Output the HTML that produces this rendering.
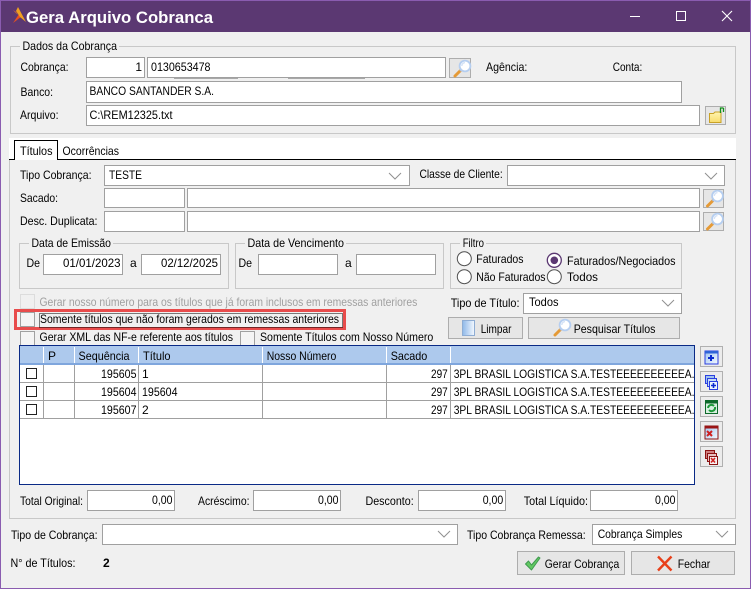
<!DOCTYPE html>
<html lang="pt-BR"><head><meta charset="utf-8"><title>Gera Arquivo Cobranca</title>
<style>
html,body{margin:0;padding:0;width:751px;height:589px;overflow:hidden;background:#f0f0f0}
svg{display:block}
text{font-family:"Liberation Sans",Arial,sans-serif;font-size:12px;fill:#000;white-space:pre}
.b{shape-rendering:crispEdges}
.i{fill:#fff;stroke:#a0a0a0;stroke-width:1}
.g{fill:none;stroke:#c8c8c8;stroke-width:1}
.btn{fill:#e6e6e6;stroke:#adadad;stroke-width:1}
.sb{fill:#ececec;stroke:#b0b0b0;stroke-width:1}
.ck{fill:#f4f4f4;stroke:#a0a0a0;stroke-width:1}
.gc{fill:#fff;stroke:#222;stroke-width:1}
.bg{fill:#f0f0f0;stroke:none}
.ch{fill:none;stroke:#909090;stroke-width:1}
.r{fill:#fff;stroke:#505050;stroke-width:1}
</style></head><body>
<svg width="751" height="589" viewBox="0 0 751 589" xmlns="http://www.w3.org/2000/svg">
<defs>
<linearGradient id="blue" x1="0" y1="0" x2="1" y2="1"><stop offset="0" stop-color="#9fc4ee"/><stop offset="1" stop-color="#f4f9ff"/></linearGradient>
<linearGradient id="lim" x1="0" y1="0" x2="1" y2="0"><stop offset="0" stop-color="#8fb8e8"/><stop offset="1" stop-color="#f4f9ff"/></linearGradient>
<linearGradient id="fold" x1="0" y1="0" x2="0" y2="1"><stop offset="0" stop-color="#fff4b0"/><stop offset="1" stop-color="#f8dc6c"/></linearGradient>
<symbol id="mag" viewBox="0 0 20 20" width="20" height="20">
<path d="M3 17L8 12" stroke="#e59a36" stroke-width="3" stroke-linecap="round" fill="none"/>
<path d="M8 12L10 10" stroke="#b0b6c4" stroke-width="2" fill="none"/>
<circle cx="13" cy="7" r="5.4" fill="#fff" stroke="#b5cef0" stroke-width="1.8"/>
<path d="M9.8 7a3.4 3.4 0 0 1 3.2-3.4" stroke="#d4e2f6" stroke-width="1.4" fill="none"/>
</symbol>
<symbol id="win" viewBox="0 0 16 16" width="16" height="16">
<rect x="1" y="1" width="13" height="13" fill="url(#blue)" stroke="#2b3fe0"/>
<rect x="1" y="1" width="13" height="2.5" fill="#2f63d8"/>
</symbol>
<symbol id="wr" viewBox="0 0 16 16" width="16" height="16">
<rect x="1" y="1" width="13" height="13" fill="url(#blue)" stroke="#8b1212"/>
<rect x="1" y="1" width="13" height="2.5" fill="#9a1414"/>
</symbol>
</defs>

<!-- window -->
<rect width="751" height="589" fill="#8a5cb0"/>
<rect x="1" y="1" width="749" height="587" fill="#f0f0f0"/>
<rect x="1" y="1" width="749" height="31" fill="#5b3872"/>
<path d="M13 23L19 14L22 16L17 20Z" fill="#e8501e"/>
<path d="M18 7L26 22L20 17L16 11Z" fill="#f0a020"/>
<path d="M16 12L13 10L18 15Z" fill="#f0742a"/>
<text x="26" y="23" textLength="187" lengthAdjust="spacingAndGlyphs" style="font-size:17px;font-weight:bold;fill:#fff">Gera Arquivo Cobranca</text>
<g class="b"><rect x="630" y="16" width="10" height="1" fill="#fff"/></g>
<rect class="b" x="676.500" y="11.500" width="9" height="9" fill="none" stroke="#fff"/>
<path d="M722 11L732 21M732 11L722 21" stroke="#fff" stroke-width="1.100" fill="none"/>

<!-- dados -->
<g class="b">
<rect class="g" x="10.500" y="46.500" width="725" height="87"/>
<rect class="bg" x="20" y="42" width="99" height="10"/>
<rect x="174" y="77" width="64" height="2" fill="#a8a8a8"/><rect x="288" y="77" width="77" height="2" fill="#a8a8a8"/>
<rect class="i" x="86.500" y="57.500" width="58" height="20"/>
<rect class="i" x="147.500" y="57.500" width="298" height="20"/>
<rect class="btn" x="449.500" y="58.500" width="21" height="19"/>
<rect class="i" x="86.500" y="81.500" width="595" height="21"/>
<rect class="i" x="86.500" y="105.500" width="613" height="20"/>
<rect class="btn" x="705.500" y="106.500" width="20" height="18"/>
</g>
<use href="#mag" x="452" y="59"/>
<path d="M709.500 113.500h4l1.500-1.500h6v10.500h-11.500z" fill="url(#fold)" stroke="#c9a227"/>
<path d="M720.500 113v-5h3M723.500 108v4" stroke="#12901a" stroke-width="1.300" fill="none"/>
<text x="22.500" y="50" textLength="94.500" lengthAdjust="spacingAndGlyphs">Dados da Cobrança</text>
<text x="20.500" y="71" textLength="48" lengthAdjust="spacingAndGlyphs">Cobrança:</text>
<text x="142" y="71" text-anchor="end">1</text>
<text x="151" y="71" textLength="59.500" lengthAdjust="spacingAndGlyphs">0130653478</text>
<text x="486" y="71" textLength="41.300" lengthAdjust="spacingAndGlyphs">Agência:</text>
<text x="612.700" y="71" textLength="29.600" lengthAdjust="spacingAndGlyphs">Conta:</text>
<text x="20.500" y="96" textLength="32.500" lengthAdjust="spacingAndGlyphs">Banco:</text>
<text x="89.500" y="95" textLength="124.500" lengthAdjust="spacingAndGlyphs">BANCO SANTANDER S.A.</text>
<text x="20" y="119" textLength="38.500" lengthAdjust="spacingAndGlyphs">Arquivo:</text>
<text x="89.500" y="119" textLength="83" lengthAdjust="spacingAndGlyphs">C:\REM12325.txt</text>

<!-- tabs -->
<g class="b">
<rect x="9" y="138" width="727" height="21" fill="#fff"/>
<rect x="9" y="159" width="727" height="1" fill="#000"/>
<path d="M14.500 160V140.500H57.500V160" fill="#fff" stroke="#000"/>
<rect x="15" y="159" width="42" height="1" fill="#fff"/>
<path d="M9.500 160V518.500H735.500V160" fill="none" stroke="#c8c8c8"/>
</g>
<text x="20" y="155" textLength="32.500" lengthAdjust="spacingAndGlyphs">Títulos</text>
<text x="62.500" y="155" textLength="56.500" lengthAdjust="spacingAndGlyphs">Ocorrências</text>

<!-- filtros -->
<g class="b">
<rect class="i" x="104.500" y="165.500" width="305" height="20"/>
<rect class="i" x="507.500" y="165.500" width="217" height="20"/>
<rect class="i" x="104.500" y="188.500" width="80" height="19"/>
<rect class="i" x="187.500" y="188.500" width="512" height="19"/>
<rect class="btn" x="703.500" y="189.500" width="20" height="18"/>
<rect class="i" x="104.500" y="211.500" width="80" height="20"/>
<rect class="i" x="187.500" y="211.500" width="512" height="20"/>
<rect class="btn" x="703.500" y="212.500" width="20" height="18"/>
</g>
<path class="ch" d="M389 173l6 6 6-6"/>
<path class="ch" d="M705 173l6 6 6-6"/>
<use href="#mag" x="704.500" y="189"/>
<use href="#mag" x="704.500" y="212"/>
<text x="20" y="179" textLength="71.500" lengthAdjust="spacingAndGlyphs">Tipo Cobrança:</text>
<text x="109" y="179" textLength="33" lengthAdjust="spacingAndGlyphs">TESTE</text>
<text x="419.500" y="178" textLength="83.200" lengthAdjust="spacingAndGlyphs">Classe de Cliente:</text>
<text x="20" y="202" textLength="38" lengthAdjust="spacingAndGlyphs">Sacado:</text>
<text x="20" y="225" textLength="77.500" lengthAdjust="spacingAndGlyphs">Desc. Duplicata:</text>

<!-- datas -->
<g class="b">
<rect class="g" x="19.500" y="243.500" width="209" height="45"/>
<rect class="bg" x="29" y="239" width="84" height="10"/>
<rect class="g" x="235.500" y="243.500" width="208" height="45"/>
<rect class="bg" x="245" y="239" width="101" height="10"/>
<rect class="g" x="450.500" y="243.500" width="231" height="45"/>
<rect class="bg" x="460" y="239" width="26" height="10"/>
<rect class="i" x="43.500" y="254.500" width="79" height="20"/>
<rect class="i" x="141.500" y="254.500" width="79" height="20"/>
<rect class="i" x="258.500" y="254.500" width="79" height="20"/>
<rect class="i" x="356.500" y="254.500" width="79" height="20"/>
</g>
<text x="31.500" y="247" textLength="79.500" lengthAdjust="spacingAndGlyphs">Data de Emissão</text>
<text x="247.500" y="247" textLength="96.500" lengthAdjust="spacingAndGlyphs">Data de Vencimento</text>
<text x="462.700" y="247" textLength="21.300" lengthAdjust="spacingAndGlyphs">Filtro</text>
<text x="26.500" y="267" textLength="13.500" lengthAdjust="spacingAndGlyphs">De</text>
<text x="63" y="267" textLength="57.500" lengthAdjust="spacingAndGlyphs">01/01/2023</text>
<text x="130" y="267">a</text>
<text x="161" y="267" textLength="57" lengthAdjust="spacingAndGlyphs">02/12/2025</text>
<text x="238.500" y="267" textLength="13.500" lengthAdjust="spacingAndGlyphs">De</text>
<text x="345" y="267">a</text>

<circle class="r" cx="464.300" cy="258.700" r="7"/>
<circle class="r" cx="464.300" cy="276.700" r="7"/>
<circle cx="554.300" cy="260.300" r="7" fill="#fff" stroke="#5b3872" stroke-width="1.300"/>
<circle cx="554.300" cy="260.300" r="3.800" fill="#5b3872"/>
<circle class="r" cx="554.300" cy="276.700" r="7"/>
<text x="476.300" y="263" textLength="47.200" lengthAdjust="spacingAndGlyphs">Faturados</text>
<text x="476.300" y="281" textLength="69.200" lengthAdjust="spacingAndGlyphs">Não Faturados</text>
<text x="567" y="265" textLength="108.500" lengthAdjust="spacingAndGlyphs">Faturados/Negociados</text>
<text x="567" y="281" textLength="31" lengthAdjust="spacingAndGlyphs">Todos</text>

<!-- checks -->
<g class="b">
<rect x="20.500" y="294.500" width="14" height="14" fill="#f0f0f0" stroke="#dcdcdc"/>
<rect x="15.500" y="310.500" width="329" height="18" fill="none" stroke="#e84c4c" stroke-width="3"/>
<rect class="ck" x="20.500" y="312.500" width="14" height="14"/>
<rect x="39.500" y="313.500" width="303" height="14" fill="none" stroke="#000" stroke-dasharray="1 1"/>
<rect class="ck" x="20.500" y="331.500" width="14" height="14"/>
<rect class="ck" x="240.500" y="331.500" width="14" height="14"/>
</g>
<text x="39.500" y="306" textLength="377.800" lengthAdjust="spacingAndGlyphs" style="fill:#a0a0a0">Gerar nosso número para os títulos que já foram inclusos em remessas anteriores</text>
<text x="40" y="323" textLength="299" lengthAdjust="spacingAndGlyphs">Somente títulos que não foram gerados em remessas anteriores</text>
<text x="39.500" y="341" textLength="193.500" lengthAdjust="spacingAndGlyphs">Gerar XML das NF-e referente aos títulos</text>
<text x="260" y="341" textLength="173.300" lengthAdjust="spacingAndGlyphs">Somente Títulos com Nosso Número</text>

<!-- tipo titulo / botoes -->
<g class="b">
<rect class="i" x="523.500" y="293.500" width="158" height="20"/>
<rect class="btn" x="448.500" y="317.500" width="74" height="21"/>
<rect class="btn" x="528.500" y="317.500" width="151" height="21"/>
</g>
<path class="ch" d="M662 300l6 6 6-6"/>
<text x="450.700" y="307" textLength="68.800" lengthAdjust="spacingAndGlyphs">Tipo de Título:</text>
<text x="529" y="306" textLength="29.500" lengthAdjust="spacingAndGlyphs">Todos</text>
<rect x="462.500" y="320.500" width="12" height="15" fill="url(#lim)" stroke="#8fadd4"/>
<text x="480.700" y="333" textLength="30.800" lengthAdjust="spacingAndGlyphs">Limpar</text>
<use href="#mag" x="552" y="318"/>
<text x="573.700" y="333" textLength="81.800" lengthAdjust="spacingAndGlyphs">Pesquisar Títulos</text>

<!-- grid -->
<g class="b">
<rect x="19.500" y="345.500" width="675" height="139" fill="#fff" stroke="#0a2a86"/>
<rect x="20" y="346" width="674" height="17" fill="#adc9ed"/>
<rect x="20" y="363" width="674" height="2" fill="#7fa6dd"/>
<g fill="#fff"><rect x="43" y="347" width="1" height="16"/><rect x="74" y="347" width="1" height="16"/><rect x="138" y="347" width="1" height="16"/><rect x="262" y="347" width="1" height="16"/><rect x="386" y="347" width="1" height="16"/><rect x="450" y="347" width="1" height="16"/></g>
<g fill="#a0a0a0">
<rect x="43" y="365" width="1" height="53"/><rect x="74" y="365" width="1" height="53"/><rect x="138" y="365" width="1" height="53"/><rect x="262" y="365" width="1" height="53"/><rect x="386" y="365" width="1" height="53"/><rect x="450" y="365" width="1" height="53"/>
<rect x="20" y="382" width="674" height="1"/><rect x="20" y="400" width="674" height="1"/><rect x="20" y="418" width="674" height="1"/>
</g>
<rect class="gc" x="26.500" y="368.500" width="10" height="10"/>
<rect class="gc" x="26.500" y="386.500" width="10" height="10"/>
<rect class="gc" x="26.500" y="404.500" width="10" height="10"/>
</g>
<text x="48" y="360">P</text>
<text x="78.500" y="360" textLength="51" lengthAdjust="spacingAndGlyphs">Sequência</text>
<text x="143" y="360" textLength="27.500" lengthAdjust="spacingAndGlyphs">Título</text>
<text x="266.700" y="360" textLength="69.600" lengthAdjust="spacingAndGlyphs">Nosso Número</text>
<text x="390.700" y="360" textLength="36.600" lengthAdjust="spacingAndGlyphs">Sacado</text>

<text x="101" y="378" textLength="35.500" lengthAdjust="spacingAndGlyphs">195605</text>
<text x="142" y="378">1</text>
<text x="431" y="378" textLength="16.700" lengthAdjust="spacingAndGlyphs">297</text>
<text x="453.700" y="378" textLength="240.800" lengthAdjust="spacingAndGlyphs">3PL BRASIL LOGISTICA S.A.TESTEEEEEEEEEEA.</text>
<text x="101" y="396" textLength="35.500" lengthAdjust="spacingAndGlyphs">195604</text>
<text x="142" y="396" textLength="35.500" lengthAdjust="spacingAndGlyphs">195604</text>
<text x="431" y="396" textLength="16.700" lengthAdjust="spacingAndGlyphs">297</text>
<text x="453.700" y="396" textLength="240.800" lengthAdjust="spacingAndGlyphs">3PL BRASIL LOGISTICA S.A.TESTEEEEEEEEEEA.</text>
<text x="101" y="414" textLength="35.500" lengthAdjust="spacingAndGlyphs">195607</text>
<text x="142" y="414">2</text>
<text x="431" y="414" textLength="16.700" lengthAdjust="spacingAndGlyphs">297</text>
<text x="453.700" y="414" textLength="240.800" lengthAdjust="spacingAndGlyphs">3PL BRASIL LOGISTICA S.A.TESTEEEEEEEEEEA.</text>

<!-- side buttons -->
<g class="b">
<rect class="sb" x="700.500" y="346.500" width="22" height="20"/>
<rect class="sb" x="700.500" y="371.500" width="22" height="20"/>
<rect class="sb" x="700.500" y="396.500" width="22" height="20"/>
<rect class="sb" x="700.500" y="421.500" width="22" height="20"/>
<rect class="sb" x="700.500" y="446.500" width="22" height="20"/>
</g>
<use href="#win" x="704" y="350"/><path d="M708 358h6M711 355v6" stroke="#0a2ad0" stroke-width="2" fill="none"/>
<g class="b">
<rect x="705.500" y="375.500" width="9" height="8" fill="#9fc4ee" stroke="#2b3fe0"/>
<rect x="707.500" y="378.500" width="9" height="8" fill="#c4dcf6" stroke="#2b3fe0"/>
<rect x="709.500" y="381.500" width="8" height="8" fill="#eaf3fd" stroke="#2b3fe0"/>
</g>
<path d="M711 385.500h5M713.500 383v5" stroke="#0a2ad0" stroke-width="1.600" fill="none"/>
<rect x="705.500" y="400.500" width="12" height="13" fill="#d8efe0" stroke="#0e6a2a"/><rect x="705.500" y="400.500" width="12" height="3" fill="#0e6a2a"/>
<path d="M708 408a3.500 3.500 0 0 1 6-2M715 407a3.500 3.500 0 0 1-6 3" stroke="#1c9a38" stroke-width="2" fill="none"/>
<use href="#wr" x="704" y="425"/><path d="M707 431l5 5M712 431l-5 5" stroke="#d02020" stroke-width="2" fill="none"/>
<g class="b">
<rect x="705.500" y="450.500" width="9" height="8" fill="#d08080" stroke="#8b1212"/>
<rect x="707.500" y="453.500" width="9" height="8" fill="#e8c0c0" stroke="#8b1212"/>
<rect x="709.500" y="456.500" width="8" height="8" fill="#f6f0f0" stroke="#8b1212"/>
</g>
<path d="M711 458l4 4.500M715 458l-4 4.500" stroke="#d02020" stroke-width="1.600" fill="none"/>

<!-- totals -->
<g class="b">
<rect class="i" x="87.500" y="490.500" width="87" height="20"/>
<rect class="i" x="253.500" y="490.500" width="87" height="20"/>
<rect class="i" x="418.500" y="490.500" width="87" height="20"/>
<rect class="i" x="590.500" y="490.500" width="87" height="20"/>
</g>
<text x="20" y="505" textLength="63" lengthAdjust="spacingAndGlyphs">Total Original:</text>
<text x="152" y="504" textLength="20.500" lengthAdjust="spacingAndGlyphs">0,00</text>
<text x="198" y="505" textLength="51.500" lengthAdjust="spacingAndGlyphs">Acréscimo:</text>
<text x="318" y="504" textLength="20.500" lengthAdjust="spacingAndGlyphs">0,00</text>
<text x="365.500" y="505" textLength="48.200" lengthAdjust="spacingAndGlyphs">Desconto:</text>
<text x="482.700" y="504" textLength="20.500" lengthAdjust="spacingAndGlyphs">0,00</text>
<text x="523.700" y="505" textLength="64.300" lengthAdjust="spacingAndGlyphs">Total Líquido:</text>
<text x="655" y="504" textLength="20.500" lengthAdjust="spacingAndGlyphs">0,00</text>

<!-- bottom -->
<g class="b">
<rect class="i" x="102.500" y="524.500" width="355" height="20"/>
<rect class="i" x="592.500" y="524.500" width="143" height="20"/>
<rect class="btn" x="517.500" y="551.500" width="107" height="23"/>
<rect class="btn" x="631.500" y="551.500" width="103" height="23"/>
</g>
<path class="ch" d="M438 531l6 6 6-6"/>
<path class="ch" d="M716 531l6 6 6-6"/>
<text x="11" y="539" textLength="86.500" lengthAdjust="spacingAndGlyphs">Tipo de Cobrança:</text>
<text x="467" y="539" textLength="118.700" lengthAdjust="spacingAndGlyphs">Tipo Cobrança Remessa:</text>
<text x="597.700" y="538" textLength="84.600" lengthAdjust="spacingAndGlyphs">Cobrança Simples</text>
<text x="10.500" y="567" textLength="65" lengthAdjust="spacingAndGlyphs">N° de Títulos:</text>
<text x="103" y="567" style="font-weight:bold">2</text>
<path d="M525.500 564l3-3 3 4 7-8 1.500 1-8.500 12z" fill="#62c862" stroke="#3f9a4f" stroke-width="1" stroke-linejoin="round"/>
<text x="544.700" y="568" textLength="74.600" lengthAdjust="spacingAndGlyphs">Gerar Cobrança</text>
<path d="M658 556.500l13.500 14M671.500 556.500l-13.500 14" stroke="#e8401a" stroke-width="2.400" fill="none"/>
<text x="677.700" y="568" textLength="32.600" lengthAdjust="spacingAndGlyphs">Fechar</text>
</svg>
</body></html>
